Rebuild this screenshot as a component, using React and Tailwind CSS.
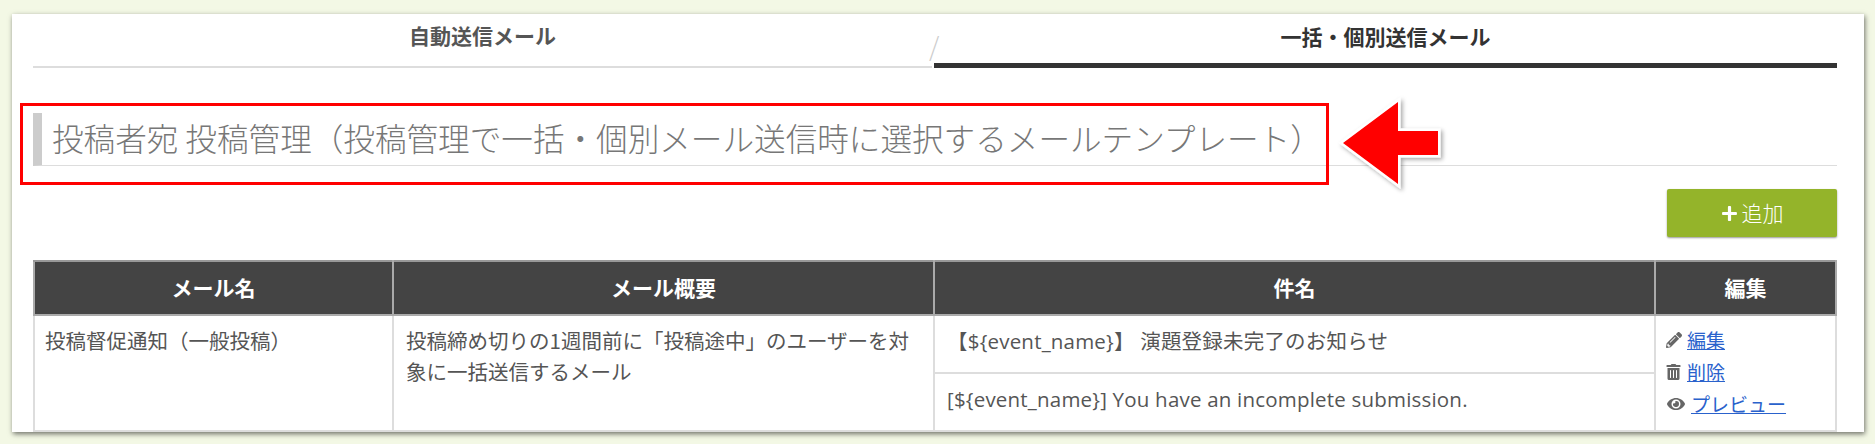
import { FaPencilAlt, FaTrashAlt, FaEye, FaPlus } from 'react-icons/fa';

const font = { fontFamily: '"Noto Sans CJK JP", "Noto Sans", sans-serif' };

const App = () => {
  return (
    <div className="relative w-[1875px] h-[444px] bg-[#f3f8e5] pt-[14px] pl-[12px] overflow-hidden" style={font}>
      <div className="w-[1852px] h-[418px] bg-white shadow-[1px_2px_5px_rgba(0,0,0,0.55)] overflow-hidden px-[21px]">
        {/* Tabs */}
        <div className="w-[1804px] flex h-[54px]">
          <div className="w-[899px] h-[54px] flex items-center justify-center border-b-2 border-[#ddd] text-[21px] font-bold text-[#555] pb-[8px]">
            自動送信メール
          </div>
          <div className="w-[2px] relative text-[26px] text-[#ccc] font-light">
            <span className="absolute left-[-3px] top-[11px]">/</span>
          </div>
          <div className="w-[903px] h-[54px] flex items-center justify-center border-b-[5px] border-[#333] text-[21px] font-bold text-[#333] pb-[3px]">
            一括・個別送信メール
          </div>
        </div>

        {/* Heading */}
        <h2 className="mt-[45px] w-[1804px] h-[53px] border-b border-[#ddd] border-l-[9px] border-l-[#ccc] pl-[10px] text-[31.6px] leading-[49px] font-light text-[#777] whitespace-nowrap">
          投稿者宛 投稿管理（投稿管理で一括・個別メール送信時に選択するメールテンプレート）
        </h2>

        {/* Add button */}
        <div className="w-[1804px] flex justify-end mt-[23px]">
          <button className="w-[170px] h-[48px] bg-[#94b42a] text-white text-[21px] font-light rounded-[2px] shadow-[0_1px_2px_rgba(0,0,0,0.4)] flex items-center justify-center gap-[4px]">
            <FaPlus className="w-[17px] h-[17px]" />追加
          </button>
        </div>

        {/* Table */}
        <table className="mt-[23px] w-[1802px] table-fixed border-collapse text-[20.5px] text-[#555]">
          <colgroup>
            <col className="w-[359px]" />
            <col className="w-[541px]" />
            <col className="w-[721px]" />
            <col className="w-[181px]" />
          </colgroup>
          <thead>
            <tr className="h-[54px] bg-[#444] text-white text-[21px] font-bold">
              <th className="border-2 border-[#aaa] border-t-[#999] font-bold">メール名</th>
              <th className="border-2 border-[#aaa] border-t-[#999] font-bold">メール概要</th>
              <th className="border-2 border-[#aaa] border-t-[#999] font-bold">件名</th>
              <th className="border-2 border-[#aaa] border-t-[#999] font-bold">編集</th>
            </tr>
          </thead>
          <tbody>
            <tr className="h-[58px]">
              <td rowSpan={2} className="border-2 border-[#ddd] align-top px-[10px] pt-[9px] leading-[30px]">投稿督促通知（一般投稿）</td>
              <td rowSpan={2} className="border-2 border-[#ddd] align-top px-[12px] pt-[9px] leading-[31px]">投稿締め切りの1週間前に「投稿途中」のユーザーを対象に一括送信するメール</td>
              <td className="border-2 border-[#ddd] px-[12px] pb-[6px] whitespace-nowrap tracking-[0.2px]" style={{ fontFamily: '"Open Sans", "Noto Sans CJK JP", sans-serif' }}>【${'{event_name}'}】 演題登録未完了のお知らせ</td>
              <td rowSpan={2} className="border-2 border-[#ddd] align-top pl-[10px] pt-[8px] text-[19px]">
                <div className="flex flex-col gap-[1px] text-[#666] leading-[31px]">
                  <a className="flex items-center gap-[5px]"><FaPencilAlt className="w-[16px] h-[16px] shrink-0" /><span className="text-[#2a62cc] underline">編集</span></a>
                  <a className="flex items-center gap-[6px]"><FaTrashAlt className="w-[15px] h-[16px] shrink-0" /><span className="text-[#2a62cc] underline">削除</span></a>
                  <a className="flex items-center gap-[5px]"><FaEye className="w-[20px] h-[16px] shrink-0" /><span className="text-[#2a62cc] underline">プレビュー</span></a>
                </div>
              </td>
            </tr>
            <tr className="h-[58px]">
              <td className="border-2 border-[#ddd] px-[12px] pb-[6px] whitespace-nowrap tracking-[0.2px]" style={{ fontFamily: '"Open Sans", "Noto Sans CJK JP", sans-serif' }}>[${'{event_name}'}] You have an incomplete submission.</td>
            </tr>
          </tbody>
        </table>
      </div>

      {/* Annotation: red box and arrow */}
      <div className="absolute left-[20px] top-[103px] w-[1309px] h-[82px] border-[3px] border-[#ff0000]" />
      <svg className="absolute left-[1330px] top-[90px]" width="125" height="110" viewBox="0 0 125 110">
        <defs>
          <filter id="s" x="-20%" y="-20%" width="150%" height="150%">
            <feDropShadow dx="2" dy="2" stdDeviation="2" floodColor="#000" floodOpacity="0.35" />
          </filter>
        </defs>
        <path d="M13 53 L68 12 L68 41 L108 41 L108 65 L68 65 L68 94 Z" fill="#ff0000" stroke="#fff" strokeWidth="5" strokeLinejoin="miter" paintOrder="stroke" filter="url(#s)" />
      </svg>
    </div>
  );
};

export default App;
